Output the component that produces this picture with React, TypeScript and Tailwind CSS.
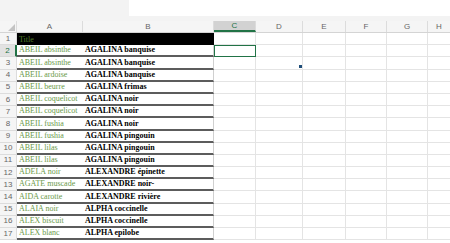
const colW = [66, 131, 42, 47, 43, 41, 41]
const letters = ['A', 'B', 'C', 'D', 'E', 'F', 'G', 'H']

const data: [string, string][] = [
  ['ABEIL absinthe', 'AGALINA banquise'],
  ['ABEIL absinthe', 'AGALINA banquise'],
  ['ABEIL ardoise', 'AGALINA banquise'],
  ['ABEIL beurre', 'AGALINA frimas'],
  ['ABEIL coquelicot', 'AGALINA noir'],
  ['ABEIL coquelicot', 'AGALINA noir'],
  ['ABEIL fushia', 'AGALINA noir'],
  ['ABEIL fushia', 'AGALINA pingouin'],
  ['ABEIL lilas', 'AGALINA pingouin'],
  ['ABEIL lilas', 'AGALINA pingouin'],
  ['ADELA noir', 'ALEXANDRE épinette'],
  ['AGATE muscade', 'ALEXANDRE noir-'],
  ['AIDA carotte', 'ALEXANDRE rivière'],
  ['ALAIA noir', 'ALPHA coccinelle'],
  ['ALEX biscuit', 'ALPHA coccinelle'],
  ['ALEX blanc', 'ALPHA epilobe'],
]

function EmptyCells({ row }: { row: number }) {
  return (
    <>
      {colW.slice(2).map((w, i) => (
        <div
          key={i}
          style={{ width: w }}
          className={
            row === 2 && i === 0
              ? 'shrink-0 border-[1.5px] border-[#217346] bg-white'
              : 'shrink-0 border-r border-b border-[#e4e4e4]'
          }
        />
      ))}
      <div className="flex-1 border-b border-[#e4e4e4]" />
    </>
  )
}

function RowHead({ n }: { n: number }) {
  const active = n === 2
  return (
    <div
      className={
        active
          ? 'w-[17px] shrink-0 flex items-center justify-center bg-[#e2e2e2] text-[#217346] border-r-2 border-[#217346] border-b border-b-[#d8d8d8]'
          : 'w-[17px] shrink-0 flex items-center justify-center bg-[#f5f5f5] text-[#666] border-r border-b border-[#dcdcdc]'
      }
    >
      <span className="text-[8px] leading-none">{n}</span>
    </div>
  )
}

export default function App() {
  return (
    <div className="relative w-[450px] h-[243px] overflow-hidden bg-white font-['Liberation_Sans',sans-serif]">
      {/* ribbon strip */}
      <div className="h-[21px] bg-[#f3f3f3] flex">
        <div className="w-[129px]" />
        <div className="flex-1 h-[16px] bg-white" />
      </div>

      {/* column headers */}
      <div className="flex h-[12px] bg-[#f5f5f5] border-b border-[#d4d4d4]">
        <div className="w-[17px] shrink-0 relative border-r border-[#dcdcdc]">
          <svg className="absolute right-[1px] bottom-[1px]" width="7" height="7" viewBox="0 0 7 7">
            <polygon points="7,0 7,7 0,7" fill="#c3c3c3" />
          </svg>
        </div>
        {letters.map((l, i) => {
          const active = l === 'C'
          return (
            <div
              key={l}
              style={i < colW.length ? { width: colW[i] } : undefined}
              className={
                active
                  ? 'shrink-0 flex items-center justify-center bg-[#d2d2d2] text-[#217346] border-b-2 border-[#217346] border-r border-r-[#dcdcdc]'
                  : i < colW.length
                    ? 'shrink-0 flex items-center justify-center text-[#666] border-r border-[#dcdcdc]'
                    : 'flex-1 flex items-center justify-center text-[#666]'
              }
            >
              <span className="text-[8px] leading-none">{l}</span>
            </div>
          )
        })}
      </div>

      {/* row 1 */}
      <div className="flex h-[12.2px]">
        <RowHead n={1} />
        <div className="w-[197px] shrink-0 bg-black flex items-end pl-[2px]">
          <span className="font-['Liberation_Serif',serif] text-[8px] leading-[10px] text-[#4f7d26]">Title</span>
        </div>
        <EmptyCells row={1} />
      </div>

      {data.map(([a, b], i) => (
        <div key={i} className="flex h-[12.2px]">
          <RowHead n={i + 2} />
          <div className="w-[66px] shrink-0 flex items-end pl-[2px] border-b-2 border-[#5c5c5c] overflow-hidden whitespace-nowrap">
            <span className="font-['Liberation_Serif',serif] text-[8px] leading-[10px] text-[#6b9a4a]">{a}</span>
          </div>
          <div className="w-[131px] shrink-0 flex items-end pl-[2px] border-b-2 border-[#5c5c5c] border-r border-r-[#d0d0d0] overflow-hidden whitespace-nowrap">
            <span className="font-['Liberation_Serif',serif] font-bold text-[8px] leading-[10px] text-black">{b}</span>
          </div>
          <EmptyCells row={i + 2} />
        </div>
      ))}

      {/* small fill handle mark */}
      <div className="absolute left-[299px] top-[65px] w-[3px] h-[3px] bg-[#1f4e79]" />
    </div>
  )
}
